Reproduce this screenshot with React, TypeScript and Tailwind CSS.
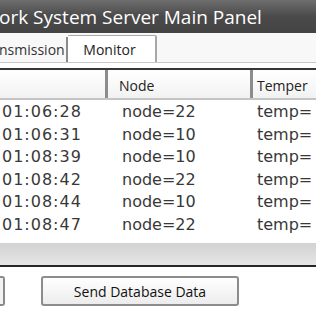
import React from "react";

const rows = [
  { time: "01:06:28", node: "node=22" },
  { time: "01:06:31", node: "node=10" },
  { time: "01:08:39", node: "node=10" },
  { time: "01:08:42", node: "node=22" },
  { time: "01:08:44", node: "node=10" },
  { time: "01:08:47", node: "node=22" },
];

const App = () => (
  <div className="w-[316px] h-[316px] overflow-hidden bg-white flex flex-col">
    {/* Title bar */}
    <div className="h-[33px] shrink-0 bg-gradient-to-b from-[#6e6e6e] via-[#4a4a4a] to-[#444444] flex items-center">
      <span className="text-white text-[19px] font-['Open_Sans',sans-serif] leading-none whitespace-nowrap -ml-[1px] mt-[2px]">
        ork System Server Main Panel
      </span>
    </div>

    {/* Tabs */}
    <div className="h-[35px] shrink-0 bg-[#f8f8f8] flex flex-col">
      <div className="h-[30px] flex items-end border-b border-[#c8c8c8] font-['Open_Sans',sans-serif] text-[14px] text-[#222]">
        <div className="h-[25px] w-[68px] flex items-center border-r-2 border-[#8a8a8a] text-[#333]">
          <span className="-ml-[1px] whitespace-nowrap">nsmission</span>
        </div>
        <div className="h-[27px] w-[89px] flex items-center justify-center bg-white border-t border-r-2 border-[#a8a8a8] rounded-tr-[2px]">
          <span className="-ml-[4px]">Monitor</span>
        </div>
      </div>
      <div className="flex-1 bg-white" />
    </div>

    {/* Table */}
    <div className="shrink-0 border-t-2 border-[#363636]">
      <div className="h-[30px] flex border-b-2 border-[#c4c4c4] bg-gradient-to-b from-white to-[#f2f2f2] font-['Open_Sans',sans-serif] text-[14px] text-[#222]">
        <div className="w-[108px] border-r-[3px] border-[#8c8c8c]" />
        <div className="w-[145px] border-r-[3px] border-[#8c8c8c] flex items-center pl-[11px] pt-[2px]">
          Node
        </div>
        <div className="flex-1 flex items-center pl-[4px] pt-[2px] whitespace-nowrap">Temper</div>
      </div>
      <div className="pt-[1px] pb-[7px] font-['DejaVu_Sans',sans-serif] text-[16px] text-[#383838]">
        {rows.map((r) => (
          <div key={r.time} className="h-[22.5px] flex items-center whitespace-nowrap">
            <div className="w-[122px] pl-[2px] tracking-[1px]">{r.time}</div>
            <div className="w-[135px]">{r.node}</div>
            <div>temp=</div>
          </div>
        ))}
      </div>
    </div>

    {/* Scroll band */}
    <div className="h-[22px] shrink-0 bg-gradient-to-b from-[#d2d2d2] to-[#e6e6e6]" />
    <div className="h-[2px] shrink-0 bg-[#262626]" />

    {/* Buttons */}
    <div className="flex-1 bg-white flex items-start pt-[9px] gap-[36px] font-['Open_Sans',sans-serif] text-[14px] text-[#111]">
      <div className="w-[5px] h-[30px] shrink-0 border-2 border-l-0 border-[#8a8a8a] rounded-r-[3px] bg-[#f2f2f2]" />
      <div className="w-[198px] h-[30px] shrink-0 border-2 border-[#8c8c8c] rounded-[3px] bg-gradient-to-b from-white to-[#ececec] flex items-center justify-center">
        Send Database Data
      </div>
    </div>
  </div>
);

export default App;
